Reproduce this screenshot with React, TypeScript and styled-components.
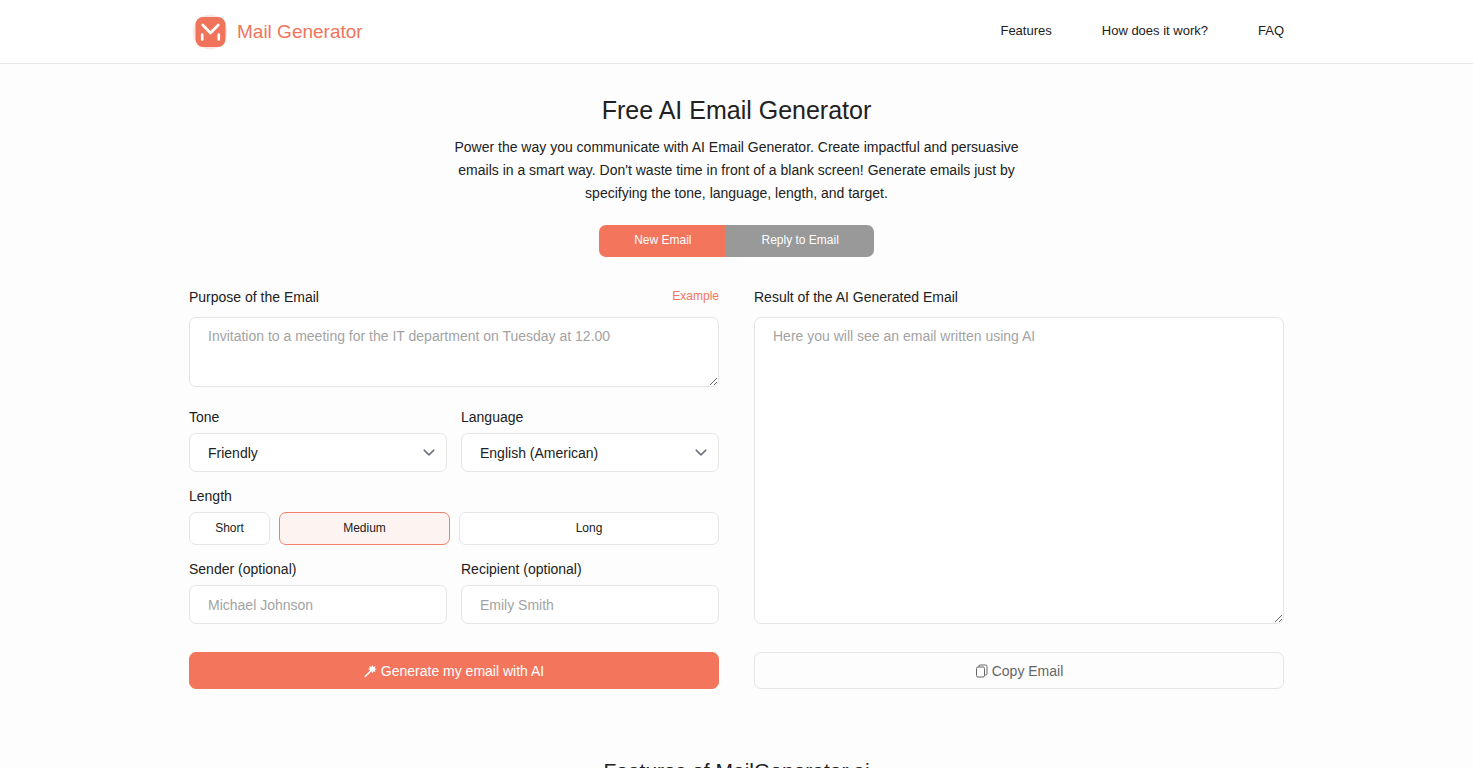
import React, { useState } from 'react';
import styled, { createGlobalStyle } from 'styled-components';

const GlobalStyle = createGlobalStyle`
  *, *::before, *::after { box-sizing: border-box; }
  html { scrollbar-width: none; }
  body {
    margin: 0;
    background: #fdfdfd;
    color: #212121;
    font-family: "Liberation Sans", Arial, sans-serif;
    font-size: 14px;
    line-height: 24px;
  }
  button, input, select, textarea { font: inherit; color: inherit; margin: 0; }
  button { cursor: pointer; }
`;

const Header = styled.header`
  background: #fff;
  border-bottom: 1px solid #e5e7eb;
`;

const Container = styled.div`
  width: 100%;
  max-width: 1127px;
  margin: 0 auto;
  padding: 0 16px;
`;

const HeaderRow = styled(Container)`
  display: flex;
  align-items: center;
  justify-content: space-between;
  height: 63px;
`;

const Brand = styled.a`
  display: flex;
  align-items: center;
  gap: 9px;
  padding-left: 3px;
  color: #f0745c;
  font-size: 19px;
  text-decoration: none;
`;

const Nav = styled.nav`
  display: flex;
  gap: 50px;
  padding-bottom: 2px;
  font-size: 13px;
  a { color: #212121; text-decoration: none; }
`;

const Intro = styled.section`
  display: flex;
  flex-direction: column;
  align-items: center;
  padding-top: 30px;
  text-align: center;
`;

const Title = styled.h1`
  margin: 0 0 10px;
  font-size: 25px;
  font-weight: 400;
  line-height: 32px;
`;

const Lead = styled.p`
  max-width: 580px;
  margin: 0 0 20px;
  line-height: 23px;
`;

const Tabs = styled.div`
  display: flex;
  overflow: hidden;
  border-radius: 7px;
`;

const Tab = styled.button<{ $active: boolean }>`
  height: 32px;
  padding: 0 35px 2px;
  border: 0;
  background: ${(p) => (p.$active ? '#f3755c' : '#999')};
  color: #fff;
  font-size: 12px;
`;

const Columns = styled.form`
  display: grid;
  grid-template-columns: 1fr 1fr;
  gap: 35px;
  padding-top: 28px;
`;

const Column = styled.div`
  display: flex;
  flex-direction: column;
`;

const LabelRow = styled.div`
  display: flex;
  align-items: center;
  justify-content: space-between;
  height: 24px;
  margin-bottom: 8px;
`;

const ExampleButton = styled.button`
  padding: 0 0 2px;
  border: 0;
  background: none;
  color: #f3755c;
  font-size: 12px;
`;

const TextArea = styled.textarea<{ $fill?: boolean }>`
  display: block;
  width: 100%;
  height: 70px;
  flex: ${(p) => (p.$fill ? '1 0 auto' : 'none')};
  padding: 6px 18px;
  border: 1px solid #e5e5e5;
  border-radius: 7px;
  background: #fff;
  resize: vertical;
  &::placeholder { color: #a3a3a3; }
`;

const Pair = styled.div<{ $top: number }>`
  display: grid;
  grid-template-columns: 1fr 1fr;
  gap: 14px;
  padding-top: ${(p) => p.$top}px;
`;

const Field = styled.label`
  display: flex;
  flex-direction: column;
  gap: 4px;
`;

const Input = styled.input`
  width: 100%;
  height: 39px;
  padding: 0 18px;
  border: 1px solid #e5e5e5;
  border-radius: 7px;
  background: #fff;
  &::placeholder { color: #a3a3a3; }
`;

const SelectBox = styled.span`
  display: grid;
  align-items: center;
  > * { grid-area: 1 / 1; }
  svg { justify-self: end; margin-right: 12px; pointer-events: none; }
`;

const Select = styled.select`
  appearance: none;
  width: 100%;
  height: 39px;
  padding: 0 36px 0 18px;
  border: 1px solid #e5e5e5;
  border-radius: 7px;
  background: #fff;
`;

const LengthGroup = styled.fieldset`
  min-width: 0;
  margin: 0;
  padding: 12px 0 0;
  border: 0;
`;

const LengthOptions = styled.div`
  display: grid;
  grid-template-columns: 81fr 171fr 260fr;
  gap: 9px;
  padding-top: 4px;
`;

const LengthButton = styled.button<{ $active: boolean }>`
  height: 33px;
  padding: 0 0 2px;
  border: 1px solid ${(p) => (p.$active ? '#f0806a' : '#e5e5e5')};
  border-radius: 7px;
  background: ${(p) => (p.$active ? '#fdf4f2' : '#fff')};
  font-size: 12px;
`;

const ActionButton = styled.button<{ $primary?: boolean }>`
  display: flex;
  align-items: center;
  justify-content: center;
  gap: 4px;
  height: 37px;
  margin-top: 28px;
  border: 1px solid ${(p) => (p.$primary ? '#f3755c' : '#e5e5e5')};
  border-radius: 7px;
  background: ${(p) => (p.$primary ? '#f3755c' : '#fdfdfd')};
  color: ${(p) => (p.$primary ? '#fff' : '#666')};
`;

const SectionTitle = styled.h2`
  margin: 0;
  padding: 66px 0 60px;
  font-size: 21px;
  font-weight: 400;
  line-height: 32px;
  text-align: center;
`;

const Logo = () => (
  <svg width="36" height="36" viewBox="0 0 36 36" aria-hidden="true">
    <circle cx="18" cy="18" r="17.3" fill="#fce6e1" />
    <rect x="3.5" y="3" width="30" height="30" rx="7.5" fill="#f0745c" />
    <path d="M10.7 11l7.8 8 7.8-8M10.200 20.500v5M26.800 20.500v5" fill="none" stroke="#fff" strokeWidth="2.6" strokeLinecap="round" strokeLinejoin="round" />
  </svg>
);

const Chevron = () => (
  <svg width="12" height="12" viewBox="0 0 12 12" fill="none" stroke="#6b7280" strokeWidth="1.5" strokeLinecap="round" strokeLinejoin="round" aria-hidden="true">
    <path d="M1.2 3.1L6 7.900l4.800-4.800" />
  </svg>
);

const Wand = () => (
  <svg width="13" height="14" viewBox="0 0 13 14" aria-hidden="true">
    <path d="M1.200 12.500L7 6.700" stroke="#fff" strokeWidth="1.600" strokeLinecap="round" />
    <path d="M8.300 1l.9 2L11.500 2l-.8 2.200 2.100.900-2.100.900.800 2.200-2.300-.900-.900 2.100-.900-2.100-2.300.900.900-2.300-2.100-.800 2.100-.900L5.100 2l2.300 1z" fill="#fff" />
  </svg>
);

const Copy = () => (
  <svg width="13" height="14" viewBox="0 0 13 14" fill="none" stroke="#666" strokeWidth="1" aria-hidden="true">
    <path d="M4 3V2a1 1 0 0 1 1-1h5.500a1.500 1.500 0 0 1 1.500 1.500V9.500a1.500 1.500 0 0 1-1.500 1.500H9.500" />
    <rect x="1.500" y="3" width="8" height="10" rx="1.500" />
  </svg>
);

const lengths = ['Short', 'Medium', 'Long'];
const modes = ['New Email', 'Reply to Email'];

export default function App() {
  const [mode, setMode] = useState('New Email');
  const [length, setLength] = useState('Medium');
  const [purpose, setPurpose] = useState('');
  const example = 'Invitation to a meeting for the IT department on Tuesday at 12.00';

  return (
    <>
      <GlobalStyle />
      <Header>
        <HeaderRow>
          <Brand href="#">
            <Logo />
            Mail Generator
          </Brand>
          <Nav>
            <a href="#features">Features</a>
            <a href="#how">How does it work?</a>
            <a href="#faq">FAQ</a>
          </Nav>
        </HeaderRow>
      </Header>
      <Container as="main">
        <Intro>
          <Title>Free AI Email Generator</Title>
          <Lead>
            Power the way you communicate with AI Email Generator. Create impactful and persuasive
            emails in a smart way. Don't waste time in front of a blank screen! Generate emails just by
            specifying the tone, language, length, and target.
          </Lead>
          <Tabs>
            {modes.map((m) => (
              <Tab key={m} type="button" $active={m === mode} onClick={() => setMode(m)}>{m}</Tab>
            ))}
          </Tabs>
        </Intro>
        <Columns onSubmit={(e) => e.preventDefault()}>
          <Column>
            <LabelRow>
              <label htmlFor="purpose">Purpose of the Email</label>
              <ExampleButton type="button" onClick={() => setPurpose(example)}>Example</ExampleButton>
            </LabelRow>
            <TextArea id="purpose" placeholder={example} value={purpose} onChange={(e) => setPurpose(e.target.value)} />
            <Pair $top={18}>
              <Field>
                Tone
                <SelectBox>
                  <Select defaultValue="Friendly"><option>Friendly</option><option>Formal</option></Select>
                  <Chevron />
                </SelectBox>
              </Field>
              <Field>
                Language
                <SelectBox>
                  <Select defaultValue="English (American)"><option>English (American)</option><option>English (British)</option></Select>
                  <Chevron />
                </SelectBox>
              </Field>
            </Pair>
            <LengthGroup aria-labelledby="length-label">
              <div id="length-label">Length</div>
              <LengthOptions>
                {lengths.map((l) => (
                  <LengthButton key={l} type="button" $active={l === length} onClick={() => setLength(l)}>{l}</LengthButton>
                ))}
              </LengthOptions>
            </LengthGroup>
            <Pair $top={12}>
              <Field>
                Sender (optional)
                <Input placeholder="Michael Johnson" />
              </Field>
              <Field>
                Recipient (optional)
                <Input placeholder="Emily Smith" />
              </Field>
            </Pair>
            <ActionButton $primary type="submit"><Wand />Generate my email with AI</ActionButton>
          </Column>
          <Column>
            <LabelRow>
              <label htmlFor="result">Result of the AI Generated Email</label>
            </LabelRow>
            <TextArea $fill id="result" placeholder="Here you will see an email written using AI" />
            <ActionButton type="button"><Copy />Copy Email</ActionButton>
          </Column>
        </Columns>
        <SectionTitle id="features">Features of MailGenerator.ai</SectionTitle>
      </Container>
    </>
  );
}
